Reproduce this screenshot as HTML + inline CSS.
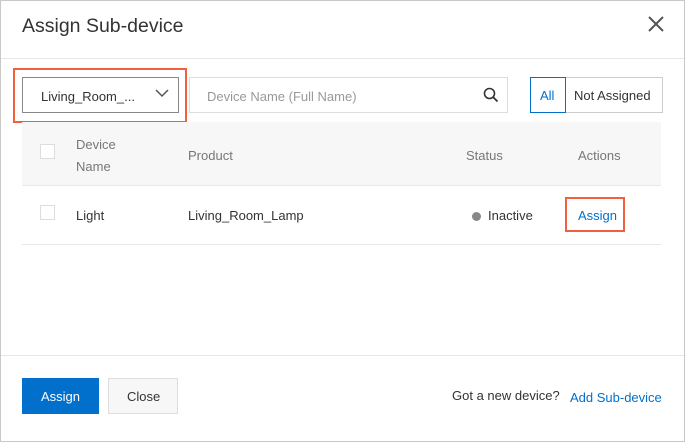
<!DOCTYPE html>
<html><head><style>
*{box-sizing:border-box;margin:0;padding:0}
body{width:685px;height:442px;background:#fff;font-family:"Liberation Sans",sans-serif;font-size:13px;color:#333;position:relative;overflow:hidden}
.frame{position:absolute;left:0;top:0;width:685px;height:442px;border:1px solid #c8c8c8}
.a{position:absolute}
.t{white-space:nowrap}
</style></head><body>
<div class="frame"></div>
<div class="a t" style="left:22px;top:15px;font-size:19.5px;color:#333">Assign Sub-device</div>
<svg class="a" style="left:647px;top:15px" width="18" height="18"><path d="M2 2L16 16M16 2L2 16" stroke="#555" stroke-width="2"/></svg>
<div class="a" style="left:1px;top:58px;width:683px;height:1px;background:#e6e6e6"></div>

<div class="a" style="left:13px;top:68px;width:174px;height:55px;border:2px solid #f0603c"></div>
<div class="a" style="left:22px;top:77px;width:157px;height:36px;border:1px solid #888"></div>
<div class="a t" style="left:41px;top:89px;font-size:13px;color:#333">Living_Room_...</div>
<svg class="a" style="left:155px;top:88px" width="14" height="10"><path d="M1 2L7 8L13 2" stroke="#555" stroke-width="1.5" fill="none"/></svg>

<div class="a" style="left:189px;top:77px;width:319px;height:36px;border:1px solid #ddd"></div>
<div class="a t" style="left:207px;top:89px;color:#999">Device Name (Full Name)</div>
<svg class="a" style="left:483px;top:87px" width="16" height="16"><circle cx="6.5" cy="6.5" r="5" stroke="#333" stroke-width="1.6" fill="none"/><path d="M10 10L14.5 14.5" stroke="#333" stroke-width="1.8"/></svg>

<div class="a" style="left:565px;top:77px;width:98px;height:36px;border:1px solid #ccc;border-left:none"></div>
<div class="a" style="left:530px;top:77px;width:36px;height:36px;border:1px solid #0070cc"></div>
<div class="a t" style="left:540px;top:88px;color:#0070cc">All</div>
<div class="a t" style="left:574px;top:88px;color:#333">Not Assigned</div>

<div class="a" style="left:22px;top:122px;width:639px;height:63px;background:#f7f7f7"></div>
<div class="a" style="left:22px;top:185px;width:639px;height:1px;background:#e8e8e8"></div>
<div class="a" style="left:22px;top:244px;width:639px;height:1px;background:#e8e8e8"></div>
<div class="a" style="left:40px;top:144px;width:15px;height:15px;border:1px solid #ddd;background:#fff"></div>
<div class="a" style="left:76px;top:134px;color:#777;line-height:22px">Device<br>Name</div>
<div class="a t" style="left:188px;top:148px;color:#777">Product</div>
<div class="a t" style="left:466px;top:148px;color:#777">Status</div>
<div class="a t" style="left:578px;top:148px;color:#777">Actions</div>

<div class="a" style="left:40px;top:205px;width:15px;height:15px;border:1px solid #ddd"></div>
<div class="a t" style="left:76px;top:208px">Light</div>
<div class="a t" style="left:188px;top:208px">Living_Room_Lamp</div>
<div class="a" style="left:472px;top:212px;width:9px;height:9px;border-radius:50%;background:#888"></div>
<div class="a t" style="left:488px;top:208px">Inactive</div>
<div class="a" style="left:565px;top:197px;width:60px;height:35px;border:2px solid #f0603c"></div>
<div class="a t" style="left:578px;top:208px;color:#0070cc">Assign</div>

<div class="a" style="left:1px;top:355px;width:683px;height:1px;background:#e6e6e6"></div>
<div class="a" style="left:22px;top:378px;width:77px;height:36px;background:#0070cc"></div>
<div class="a t" style="left:41px;top:389px;color:#fff">Assign</div>
<div class="a" style="left:108px;top:378px;width:70px;height:36px;border:1px solid #ddd;background:#f7f7f7"></div>
<div class="a t" style="left:127px;top:389px">Close</div>
<div class="a t" style="left:452px;top:388px">Got a new device?</div>
<div class="a t" style="left:570px;top:390px;color:#0070cc">Add Sub-device</div>
</body></html>
